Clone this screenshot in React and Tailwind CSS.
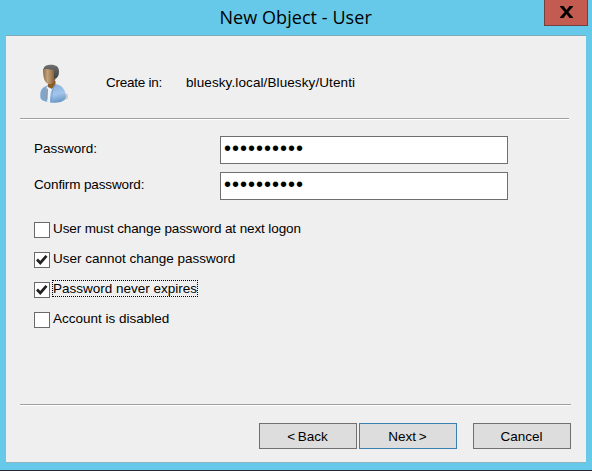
import React from "react";

function UserIcon() {
  return (
    <svg className="block h-[42px] w-[32px]" viewBox="0 0 32 42">
      <defs>
        <linearGradient id="face" x1="0" x2="1">
          <stop offset="0" stopColor="#8a6847" />
          <stop offset="0.35" stopColor="#c4a17c" />
          <stop offset="0.7" stopColor="#a07a52" />
          <stop offset="1" stopColor="#74502b" />
        </linearGradient>
        <linearGradient id="shirt" x1="0" y1="0" x2="0.2" y2="1">
          <stop offset="0" stopColor="#86afd9" />
          <stop offset="0.6" stopColor="#a3c5ec" />
          <stop offset="1" stopColor="#6d9bc9" />
        </linearGradient>
        <linearGradient id="hair" x1="0" y1="0" x2="0" y2="1">
          <stop offset="0" stopColor="#70706f" />
          <stop offset="1" stopColor="#3f4041" />
        </linearGradient>
      </defs>
      <ellipse cx="28" cy="32.500" rx="2" ry="3" fill="#cccccc" />
      <path d="M2.300 33C2 28 3 25 5.500 23.500L11 20.500v17.500C6 37.500 2.500 36 2.300 33z" fill="#7ba6d0" />
      <path d="M8.500 23l4-2 4 2-4 15.500-3.500-1z" fill="#edf3fa" />
      <path d="M8.500 24l1.500 1-.5 11-1.500-1z" fill="#9793a0" />
      <path d="M10 17h7.500v4.500L14 25l-4-2z" fill="#8a5d29" />
      <path d="M12 38.500c-.3-5 .2-9.500 2-13.500l3.500-5c3.500.5 7 2.500 8.500 5.500 1 2 1.800 4.500 1.800 7.500 0 3.500-4.500 5.500-10.300 5.800-2.200 0-4 0-5.500-.3z" fill="url(#shirt)" />
      <path d="M17.500 21c-3 4-4 9-3.800 16" fill="none" stroke="#7198c4" strokeWidth="0.7" />
      <path d="M5 5h12.500v10c-1 3-3.500 5.800-7 5C6.500 19 5 13 5 5z" fill="url(#face)" />
      <path d="M5.500 5C6 2 9 .8 13 .8c5 0 8 2 8 6.700 0 3.500-1 5.500-3 7L16 14V6C12.500 5 8.500 5 5.500 5z" fill="url(#hair)" />
    </svg>
  );
}

function Divider({ className }) {
  return <div className={`h-[2px] border-t border-[#a0a0a0] bg-white ${className}`} />;
}

function PasswordRow({ label, tracking, value }) {
  return (
    <div className="flex h-[28px]">
      <div className={`w-[186px] pt-[5px] leading-[16px] ${tracking}`}>{label}</div>
      <div className="h-[28px] w-[288px] border border-[#6f6f6f] bg-white pl-[3px] text-[20px] leading-[22px] tracking-[1px] text-black">
        {value}
      </div>
    </div>
  );
}

function CheckRow({ label, checked, focused, tracking = "" }) {
  return (
    <div className="flex h-[16px]">
      <div className="h-[16px] w-[16px] shrink-0 border border-[#6a6a6a] bg-white">
        {checked && (
          <svg className="block h-[14px] w-[14px]" viewBox="0 0 14 14">
            <path d="M2 6.500 5.300 10 11.500 2.800" fill="none" stroke="#202020" strokeWidth="2.7" />
          </svg>
        )}
      </div>
      <div
        className={`-mt-[2px] ml-[2px] h-[17px] whitespace-nowrap border border-dotted leading-[15px] ${focused ? "border-black" : "border-transparent"} ${tracking}`}
      >
        {label}
      </div>
    </div>
  );
}

function Button({ children, className }) {
  return (
    <button className={`h-[26px] w-[98px] border bg-[#dddddd] pr-[1px] text-center leading-[25px] [word-spacing:-1px] ${className}`}>
      {children}
    </button>
  );
}

export default function App() {
  return (
    <div className="flex h-[471px] w-[592px] flex-col overflow-hidden border-b border-[#242a32] bg-[#66c9e9] font-['Liberation_Sans',Arial,sans-serif] text-[13.5px] text-black">
      <header className="flex h-[35px] shrink-0 justify-end">
        <div className="flex-1 pl-[219.5px] pt-[4px] font-['Open_Sans',sans-serif] text-[18px] leading-[26px] tracking-[0.06px]">
          New Object - User
        </div>
        <button className="mr-[4px] flex h-[26px] w-[44px] items-start justify-center border border-t-0 border-[#71403f] bg-[#c35b51] pt-[6px]">
          <svg className="block h-[12px] w-[13px]" viewBox="0 0 13 12">
            <path d="M0 0h3.500l3 4 3-4H13v.8L8.300 6 13 11.200v.8H9.500l-3-4-3 4H0v-.8L4.700 6 0 .8z" fill="#000" />
          </svg>
        </button>
      </header>
      <main className="mx-[6px] h-[428px] border-y border-t-[#7fa9b9] border-b-[#8eb5c3] bg-[#efefef] pl-[14px]">
        <section className="flex h-[82px] pl-[18px] pt-[28px]">
          <UserIcon />
          <div className="ml-[36px] w-[80px] pt-[11px] leading-[16px] tracking-[-0.25px]">Create in:</div>
          <div className="pt-[11px] leading-[16px] tracking-[0.1px]">bluesky.local/Bluesky/Utenti</div>
        </section>
        <Divider className="w-[549px]" />
        <section className="flex flex-col gap-[8px] pl-[14px] pt-[16px]">
          <PasswordRow label="Password:" tracking="tracking-[0px]" value="••••••••••" />
          <PasswordRow label="Confirm password:" tracking="tracking-[-0.13px]" value="••••••••••" />
        </section>
        <section className="flex h-[204px] flex-col gap-[14px] pl-[14px] pt-[22px]">
          <CheckRow label="User must change password at next logon" tracking="tracking-[-0.11px]" />
          <CheckRow label="User cannot change password" checked />
          <CheckRow label="Password never expires" checked focused />
          <CheckRow label="Account is disabled" />
        </section>
        <Divider className="w-[551px]" />
        <footer className="flex pl-[239px] pt-[17px]">
          <Button className="border-[#707070]">&lt; Back</Button>
          <Button className="ml-[2px] border-[#3c7fb1]">Next &gt;</Button>
          <Button className="ml-[16px] border-[#707070]">Cancel</Button>
        </footer>
      </main>
    </div>
  );
}
